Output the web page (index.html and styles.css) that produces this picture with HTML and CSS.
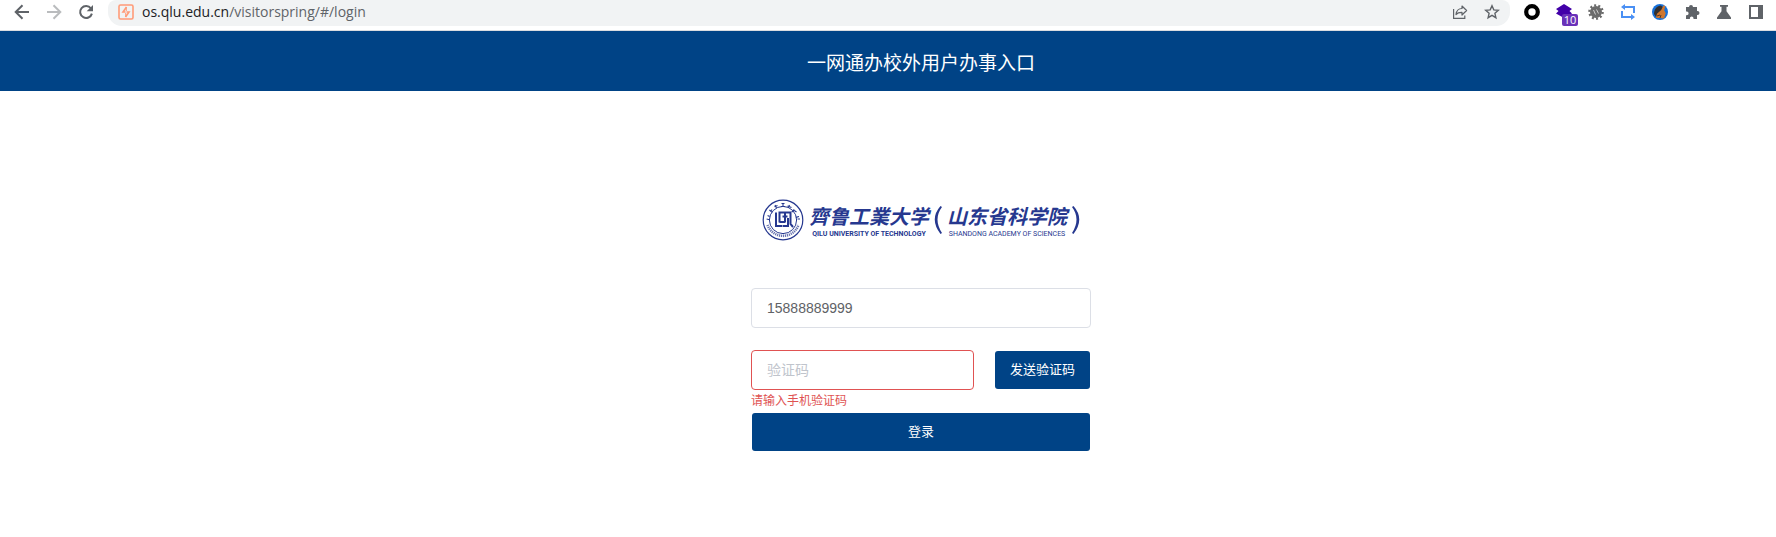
FILE: index.html
```html
<!DOCTYPE html>
<html lang="zh-CN">
<head>
<meta charset="utf-8">
<title>一网通办校外用户办事入口</title>
<link rel="stylesheet" href="styles.css">
</head>
<body>
<div class="toolbar">
  <nav class="nav-buttons">
    <button class="icon-button" type="button" aria-label="后退"><svg viewBox="0 0 16 16" fill="none" stroke="#5f6368" stroke-width="2"><path d="M15 8H2M8.500 1.200L1.700 8l6.800 6.800"/></svg></button>
    <button class="icon-button" type="button" aria-label="前进"><svg viewBox="0 0 16 16" fill="none" stroke="#babcbe" stroke-width="2"><path d="M1 8h13M7.500 1.200L14.300 8l-6.800 6.800"/></svg></button>
    <button class="icon-button" type="button" aria-label="刷新"><svg viewBox="0 0 16 16"><path d="M12.900 4.300A6 6 0 1 0 13.900 9.600" fill="none" stroke="#5f6368" stroke-width="2"/><path d="M15 1v6.300H8.700z" fill="#5f6368"/></svg></button>
  </nav>
  <div class="address-bar">
    <svg class="icon" viewBox="0 0 16 16" fill="none" stroke="#ff9b78"><rect x="1" y="1" width="14" height="14" rx="1.500" stroke-width="1.600"/><path d="M8.500 3L5 8h2.500M8.500 8H11l-3.500 5" stroke-width="1.600"/><path d="M8.300 3v4M7.700 9v4" stroke-width="1"/></svg>
    <span class="url"><span class="url-host">os.qlu.edu.cn</span>/visitorspring/#/login</span>
    <button class="icon-button" type="button" aria-label="分享"><svg viewBox="0 0 16 16" fill="none" stroke="#5f6368" stroke-width="1.200"><path d="M1.600 5v9.400h11.200v-3"/><path d="M4 10.500c.5-4 2.500-6 6-6V2l4.600 4.500L10 11V8.300c-3-.1-4.600.5-6 2.200z" stroke-linejoin="round"/></svg></button>
    <button class="icon-button" type="button" aria-label="收藏"><svg viewBox="0 0 16 16" fill="none" stroke="#5f6368" stroke-width="1.400"><path d="M8 1.800l1.800 4.100 4.500.4-3.400 3 1 4.400L8 11.400l-3.900 2.300 1-4.400-3.400-3 4.500-.4z"/></svg></button>
  </div>
  <div class="extensions">
    <button class="icon-button" type="button" aria-label="扩展 O"><svg viewBox="0 0 16 16"><circle cx="8" cy="8" r="5.800" fill="#fff" stroke="#000" stroke-width="4.200"/></svg></button>
    <button class="icon-button badged" type="button" aria-label="扩展"><svg viewBox="0 0 16 16" fill="#4200a8"><path d="M8 0l8 5-2.500 2L16 9.500 8 14 0 9.500 2.500 7 0 5z"/></svg><span class="badge">10</span></button>
    <button class="icon-button" type="button" aria-label="调试"><svg viewBox="0 0 16 16"><g stroke="#6b6b6b" fill="none"><circle cx="8" cy="8" r="6.600" stroke-width="2.400" stroke-dasharray="2 2.150"/><circle cx="8" cy="8" r="3" stroke-width="6"/></g><path d="M5.500 6l2 4.500M8.500 5.500l2 4" stroke="#ccc" stroke-width="1"/></svg></button>
    <button class="icon-button" type="button" aria-label="转发"><svg viewBox="0 0 16 16" fill="none" stroke="#4a90f4" stroke-width="2"><path d="M4 3h10v6M12 13H2V7"/><path d="M5 0v6L1 3zM11 10v6l4-3z" fill="#4a90f4" stroke="none"/></svg></button>
    <button class="icon-button" type="button" aria-label="清理"><svg viewBox="0 0 16 16"><circle cx="8" cy="8" r="8" fill="#1670d8"/><path d="M2 10C2 5 5 2 9 1.500L12 4 7 11l-3 2z" fill="#33302f"/><path d="M11.500 1.200l1.700 1-1 4 1.500 3-1.700 5.200-8-.6 1-4 4.200-3.800z" fill="#ce762f"/><path d="M5 12l3-1M8 14l1-3" stroke="#563824"/></svg></button>
    <button class="icon-button" type="button" aria-label="扩展程序"><svg viewBox="0 0 16 16" fill="#5f6368"><path d="M5 3a2 2 0 0 1 4 0h4v4h.5a2 2 0 0 1 0 4H13v4H9.500v-.7a1.800 1.800 0 0 0-3.600 0v.7H2v-3.800h.8a1.800 1.800 0 0 0 0-3.600H2V3z"/></svg></button>
    <button class="icon-button" type="button" aria-label="实验室"><svg viewBox="0 0 16 16" fill="#5f6368"><path d="M4 1h8v1.700h-1.500v4.500L15 13.500V15H1v-1.500l4.500-6.300V2.700H4z"/></svg></button>
    <button class="icon-button" type="button" aria-label="侧边栏"><svg viewBox="0 0 16 16"><path d="M1 1h14v14H1zM3 3v10h7V3z" fill="#5f6368" fill-rule="evenodd"/></svg></button>
  </div>
</div>

<header class="page-header"><h1 class="page-title">一网通办校外用户办事入口</h1></header>

<main class="page-main">
  <div class="logo">
    <svg class="seal" viewBox="0 0 42 42" fill="none" stroke="#26388f">
      <circle cx="21" cy="21" r="19.800" stroke-width="1.200"/>
      <circle cx="21" cy="21" r="13.600" stroke-width="1"/>
      <path d="M5.500 26A16.500 16.500 0 0 0 36.500 26" stroke-width="2.600" stroke-dasharray="1.200 .8" opacity=".7"/>
      <path d="M4.600 20l3 .8M5.600 16.500l2 1M7.400 11l2.800 2.400M10 10.500l-1.500 2M13 6l1.500 3M15.500 6.500l-3 1.300M19.500 4.500h3M21 4.500v3M19 7.500h4M27.500 6l-1.300 3M25.500 7l4 1.500M32.300 10.500l-2.500 2.500M34.500 13l-3-2M37 17.500l-3 .9M35.500 20h2.500" stroke-width="1.100"/>
      <path d="M14 13.500v13.500h6.500M17.500 23.500V13.500h11v11.500l2.500 3M17.500 23h6M20.500 17.500h5M23 13.500v9.500M21 27h5v-8" stroke-width="2"/>
    </svg>
    <div class="logo-name">
      <span class="logo-zh">齊鲁工業大学</span>
      <span class="logo-en logo-en-bold">QILU UNIVERSITY OF TECHNOLOGY</span>
    </div>
    <svg class="paren" viewBox="0 0 8 28" fill="#26388f"><path d="M6.500 0Q-5 13 6.500 28L8 27Q-1 13 8 1z"/></svg>
    <div class="logo-name">
      <span class="logo-zh">山东省科学院</span>
      <span class="logo-en">SHANDONG ACADEMY OF SCIENCES</span>
    </div>
    <svg class="paren" viewBox="0 0 8 28" fill="#26388f"><path d="M1.500 0Q13 13 1.500 28L0 27Q9 13 0 1z"/></svg>
  </div>
  <form class="login-form">
    <input class="field" type="text" value="15888889999" aria-label="手机号">
    <div class="code-row">
      <input class="field field-error" type="text" placeholder="验证码" aria-label="验证码" aria-describedby="code-error">
      <button class="button" type="button">发送验证码</button>
    </div>
    <p class="error" id="code-error">请输入手机验证码</p>
    <button class="button button-login" type="button">登录</button>
  </form>
</main>
</body>
</html>
```

FILE: styles.css
```css
* { box-sizing: border-box; }

body {
  margin: 0;
  background: #fff;
  font-family: "Liberation Sans", "Noto Sans CJK SC", sans-serif;
}

button { font-family: inherit; }

.toolbar {
  display: flex;
  height: 31px;
  padding: 0 12px 4px 14px;
  border-bottom: 1px solid #dadce0;
  overflow: hidden;
}

.nav-buttons,
.extensions {
  display: flex;
  align-items: center;
  gap: 16px;
  height: 24px;
}

.icon-button {
  display: block;
  flex: none;
  width: 16px;
  height: 16px;
  padding: 0;
  border: 0;
  background: none;
}

.icon-button svg,
.icon {
  display: block;
  flex: none;
  width: 16px;
  height: 16px;
}

.address-bar {
  display: flex;
  flex: 1;
  align-items: center;
  gap: 16px;
  height: 26px;
  margin: 0 14px;
  padding: 0 10px 2px;
  border-radius: 8px 8px 14px 14px;
  background: #f1f3f4;
}

.url {
  flex: 1;
  margin-left: -8px;
  color: #5f6368;
  font: 14px/20px "Open Sans", "Noto Sans", sans-serif;
}

.url-host { color: #202124; }

.badged { position: relative; }

.badge {
  position: absolute;
  top: 10px;
  left: 6px;
  width: 16px;
  border-radius: 2px;
  background: #6a32b9;
  color: #fff;
  font: 11px/12px "Open Sans", sans-serif;
  text-align: center;
}

.page-header {
  display: flex;
  align-items: center;
  justify-content: center;
  height: 60px;
  padding: 6px 0 0 66px;
  background: #004386;
}

.page-title {
  margin: 0;
  color: #fff;
  font-size: 19px;
  font-weight: 400;
  line-height: 28px;
}

.page-main {
  display: flex;
  flex-direction: column;
  align-items: center;
  gap: 47px;
  padding: 108px 0 40px 66px;
}

.logo {
  display: flex;
  align-items: center;
  gap: 4px;
  height: 42px;
  color: #26388f;
}

.seal { width: 42px; height: 42px; }

.paren { width: 8px; height: 28px; }

.logo-name {
  display: flex;
  flex-direction: column;
  align-items: center;
  width: 122px;
  padding-top: 4px;
  white-space: nowrap;
}

.logo-zh {
  font-size: 20px;
  font-style: italic;
  font-weight: 700;
  line-height: 24px;
}

.logo-en { font: 7px/10px Roboto, "Liberation Sans", sans-serif; }

.logo-en-bold { font-weight: 700; }

.login-form {
  display: flex;
  flex-direction: column;
  width: 340px;
}

.field {
  width: 100%;
  height: 40px;
  padding: 0 15px;
  border: 1px solid #dcdfe6;
  border-radius: 4px;
  background: #fff;
  color: #606266;
  font-family: inherit;
  font-size: 14px;
}

.field::placeholder { color: #c0c4cc; opacity: 1; }

.field-error {
  flex: 1;
  min-width: 0;
  border-color: #e05252;
}

.code-row {
  display: flex;
  align-items: center;
  gap: 21px;
  margin-top: 22px;
  padding-right: 1px;
}

.button {
  height: 38px;
  padding: 0 14px 3px;
  border: 0;
  border-radius: 3px;
  background: #004386;
  color: #fff;
  font-size: 13px;
  white-space: nowrap;
}

.code-row .button { width: 95px; }

.error {
  margin: 0;
  color: #e05252;
  font-size: 12px;
  line-height: 23px;
}

.button-login { margin: 0 1px; }
```
